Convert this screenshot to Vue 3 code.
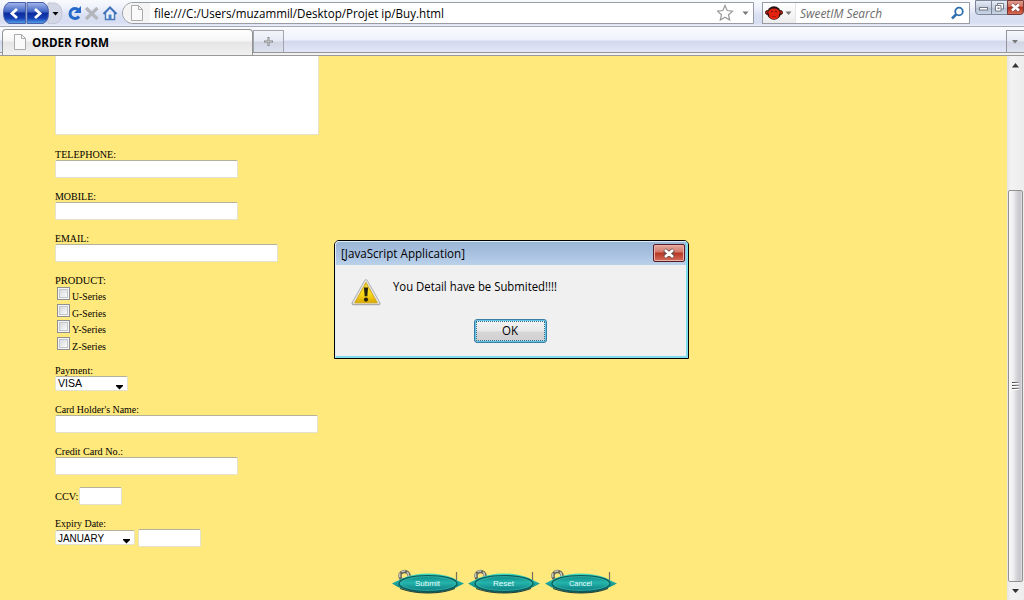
<script setup>
import { h } from 'vue'

// Text run drawn at a fixed measured width
const Fit = (p) =>
  h('svg', { width: p.w + 2, height: p.h, class: 'fit' }, [
    h('text', { x: 0, y: p.y, textLength: p.w, lengthAdjust: 'spacingAndGlyphs' }, p.t),
  ])
Fit.props = ['w', 'h', 'y', 't']

const contacts = [
  { label: 'TELEPHONE:', lw: 61, size: 'mid' },
  { label: 'MOBILE:', lw: 41, size: 'mid' },
  { label: 'EMAIL:', lw: 34, size: 'long' },
]
const cards = [
  { label: "Card Holder's Name:", lw: 84, size: 'wide' },
  { label: 'Credit Card No.:', lw: 68, size: 'mid' },
]
const products = ['U-Series', 'G-Series', 'Y-Series', 'Z-Series']
const buttons = [
  { t: 'Submit', w: 25 },
  { t: 'Reset', w: 21 },
  { t: 'Cancel', w: 23 },
]
</script>

<template>
  <div class="window">
    <header class="toolbar">
      <svg class="nav" width="122" height="27" viewBox="0 0 122 27">
        <defs>
          <linearGradient id="blue" x1="0" y1="0" x2="0" y2="1">
            <stop offset="0" stop-color="#a5b8eb" />
            <stop offset=".45" stop-color="#3d62c3" />
            <stop offset=".5" stop-color="#0c2b9c" />
            <stop offset=".75" stop-color="#1540b5" />
            <stop offset="1" stop-color="#58a5ee" />
          </linearGradient>
        </defs>
        <path d="M48 3h7q7 2 7 10.500t-7 10h-7z" fill="#d3d6e5" stroke="#c3c7d8" />
        <path d="M9 2.500h16.500v21H9q-5.500-2-5.500-10.500T9 2.500z" fill="url(#blue)" stroke="#4a60a8" />
        <path d="M27 2.500h16q5.500 2 5.500 10.500T43 23.500H27z" fill="url(#blue)" stroke="#4a60a8" />
        <path d="M17 9l-5 4.500 5 4.500M35 9l5 4.500-5 4.500" fill="none" stroke="#fff" stroke-width="2.800" />
        <path d="M52.500 12h6l-3 3.500z" fill="#000" />
        <path d="M78.500 10a5 5 0 1 0 .5 6.500" fill="none" stroke="#2669c9" stroke-width="3" />
        <path d="M81 6v7h-7z" fill="#2669c9" />
        <path d="M86 8l11.500 11M97.500 8l-11.500 11" stroke="#b5b6bb" stroke-width="3.200" />
        <path d="M105.500 13v6.500h9V13" fill="#edf3ff" stroke="#4a78b8" stroke-width="1.500" />
        <path d="M103.500 14l6.500-6.500 6.500 6.500" fill="none" stroke="#3d70b7" stroke-width="2" />
        <path d="M108.500 19.500v-5h3v5" fill="#4b80c2" />
      </svg>
      <div class="address">
        <span class="site">
          <svg width="14" height="17"><path d="M1.500.5h7l4 4v11h-11zM8.500.5v4h4" fill="#fafafa" stroke="#aaa" /></svg>
        </span>
        <Fit class="ui" :w="290" :h="20" :y="15" t="file:///C:/Users/muzammil/Desktop/Projet ip/Buy.html" />
        <svg class="star" width="36" height="20">
          <path d="M8 2.500l2.200 5 5.300.6-4 3.600 1.200 5.300L8 14.300 3.300 17l1.200-5.300-4-3.600 5.300-.6z" fill="#fff" stroke="#999" stroke-width="1.200" />
          <path d="M25.500 8.500h6l-3 3.500z" fill="#777" />
        </svg>
      </div>
      <div class="search">
        <span class="engine">
          <svg width="32" height="20">
            <circle cx="4.500" cy="9.500" r="2" fill="#d3200f" stroke="#3b0b0b" />
            <circle cx="17.500" cy="9.500" r="2" fill="#d3200f" stroke="#3b0b0b" />
            <ellipse cx="11" cy="10" rx="6.800" ry="6.800" fill="#291010" />
            <ellipse cx="11" cy="9.500" rx="5.800" ry="4" fill="#e3230f" />
            <ellipse cx="11" cy="12.800" rx="5" ry="3.500" fill="#e3230f" />
            <circle cx="9" cy="8.500" r=".8" fill="#52100b" /><circle cx="13" cy="8.500" r=".8" fill="#52100b" />
            <path d="M9 13.500h4" stroke="#a51c0d" />
            <path d="M22.500 8.500h6l-3 3.500z" fill="#777" />
          </svg>
        </span>
        <Fit class="ui hint" :w="82" :h="20" :y="15" t="SweetIM Search" />
        <svg class="lens" width="15" height="15">
          <circle cx="9" cy="5.500" r="3.800" fill="#fff" stroke="#2e6fae" stroke-width="1.800" />
          <path d="M6.300 8.300L2 12.500" stroke="#2e6fae" stroke-width="2.600" />
        </svg>
      </div>
      <svg class="controls" width="49" height="15" viewBox="0 0 49 15">
        <defs>
          <linearGradient id="grey" x1="0" y1="0" x2="0" y2="1">
            <stop offset="0" stop-color="#e8edf7" /><stop offset=".5" stop-color="#c6cfdf" /><stop offset=".55" stop-color="#b4bfd2" /><stop offset="1" stop-color="#ccd7e8" />
          </linearGradient>
          <linearGradient id="red" x1="0" y1="0" x2="0" y2="1">
            <stop offset="0" stop-color="#e4a395" /><stop offset=".45" stop-color="#cc6a58" /><stop offset=".5" stop-color="#b5301b" /><stop offset="1" stop-color="#d6705a" />
          </linearGradient>
        </defs>
        <path d="M.5 .5v10.500q0 3.500 3 3.500h13V.5z" fill="url(#grey)" stroke="#7b8596" />
        <path d="M16.500 .5h16v14h-16z" fill="url(#grey)" stroke="#7b8596" />
        <path d="M32.500 .5h16v10.500q0 3.500-3 3.500h-13z" fill="url(#red)" stroke="#753a38" />
        <rect x="4.500" y="7.500" width="8" height="2.500" fill="#fff" stroke="#737b88" />
        <path d="M22.500 3.500h6v5.500h-6z" fill="#fff" stroke="#737b88" />
        <path d="M20.500 5.500h5.500v5.500h-5.500z" fill="#fff" stroke="#737b88" />
        <path d="M22.500 7.500h2v1.500h-2z" fill="#737b88" />
        <path d="M37 4.500l7 6M44 4.500l-7 6" stroke="#8a4f48" stroke-width="4" />
        <path d="M37 4.500l7 6M44 4.500l-7 6" stroke="#fff" stroke-width="2.600" />
      </svg>
    </header>

    <nav class="tabs">
      <div class="tab">
        <svg width="14" height="17"><path d="M1.500.5h7l4 4v11h-11zM8.500.5v4h4" fill="#fafafa" stroke="#aaa" /></svg>
        <Fit class="ui title" :w="77" :h="20" :y="13.500" t="ORDER FORM" />
      </div>
      <div class="plus">
        <svg width="9" height="9"><path d="M4.500 0v9M0 4.500h9" stroke="#858585" stroke-width="2" /><path d="M4.500 1v7M1 4.500h7" stroke="#ccc" stroke-width=".7" /></svg>
      </div>
      <div class="all"><svg width="7" height="4"><path d="M0 0h6L3 3.500z" fill="#777" /></svg></div>
    </nav>

    <div class="view">
      <main class="page">
        <form class="form">
          <div class="memo"></div>
          <div v-for="f in contacts" :key="f.label" class="group">
            <Fit :w="f.lw" :h="12" :y="10" :t="f.label" />
            <div class="input" :class="f.size"></div>
          </div>
          <div class="group">
            <Fit :w="51" :h="12" :y="10" t="PRODUCT:" />
            <div v-for="p in products" :key="p" class="check">
              <i class="box"></i>
              <Fit :w="34" :h="15" :y="12" :t="p" />
            </div>
          </div>
          <div class="group">
            <Fit :w="38" :h="12" :y="10" t="Payment:" />
            <div class="select visa">
              <Fit :w="24" :h="15" :y="11" t="VISA" />
              <svg width="7" height="5"><path d="M0 0h7v1L3.500 4.500 0 1z" /></svg>
            </div>
          </div>
          <div v-for="f in cards" :key="f.label" class="group">
            <Fit :w="f.lw" :h="12" :y="10" :t="f.label" />
            <div class="input" :class="f.size"></div>
          </div>
          <div class="group line">
            <Fit class="ccv" :w="23.500" :h="18" :y="13" t="CCV:" />
            <div class="input tiny"></div>
          </div>
          <div class="group">
            <Fit :w="51" :h="12" :y="10" t="Expiry Date:" />
            <div class="line">
              <div class="select month">
                <Fit :w="46" :h="15" :y="11.500" t="JANUARY" />
                <svg width="7" height="5"><path d="M0 0h7v1L3.500 4.500 0 1z" /></svg>
              </div>
              <div class="input year"></div>
            </div>
          </div>
        </form>
        <div class="actions">
          <svg v-for="b in buttons" :key="b.t" width="72" height="26" viewBox="0 0 72 26">
            <defs>
              <linearGradient id="teal" x1="0" y1="0" x2="0" y2="1">
                <stop offset="0" stop-color="#3ddcbd" /><stop offset=".5" stop-color="#1aa59e" /><stop offset="1" stop-color="#056468" />
              </linearGradient>
              <linearGradient id="gem" x1="0" y1="0" x2="0" y2="1">
                <stop offset="0" stop-color="#0a8582" /><stop offset=".45" stop-color="#25b5ac" /><stop offset="1" stop-color="#08777c" />
              </linearGradient>
            </defs>
            <circle cx="12.500" cy="7" r="4.500" fill="none" stroke="#666557" stroke-width="3.400" />
            <circle cx="12" cy="6.500" r="4.500" fill="none" stroke="#c4c3b8" stroke-width="1.700" stroke-dasharray="4 2" />
            <path d="M64.500 3v12" stroke="#77705a" stroke-width="1.200" />
            <path d="M0 14.500Q5 12 11 9 22 4.500 36 4.500t25 4.500q5 3 11 5.500-6 3-11 5.500-11 4-25 4t-25-4Q5 18 0 14.500z" fill="url(#teal)" />
            <path d="M8 19.500Q20 24 36 24t27-4.500" fill="none" stroke="#213d35" />
            <ellipse cx="36" cy="14.500" rx="29" ry="8" fill="url(#gem)" stroke="#0b5a59" stroke-width="1.200" />
            <ellipse cx="36" cy="14.500" rx="27.200" ry="6.800" fill="none" stroke="#46bdb2" stroke-width=".6" />
            <text x="35.500" y="17" text-anchor="middle" :textLength="b.w" lengthAdjust="spacingAndGlyphs">{{ b.t }}</text>
          </svg>
        </div>
      </main>
      <aside class="scroll">
        <svg class="arrow" width="8" height="5"><path d="M0 4.500h7L3.500 0z" fill="#333" /></svg>
        <div class="thumb"><i></i><i></i><i></i></div>
        <svg class="arrow" width="8" height="5"><path d="M0 0h7L3.500 4z" fill="#333" /></svg>
      </aside>
    </div>

    <section class="dialog">
      <div class="caption">
        <Fit class="ui" :w="124" :h="20" :y="15" t="[JavaScript Application]" />
        <div class="close">
          <svg width="14" height="11"><path d="M2.500 2l9 7M11.500 2l-9 7" stroke="#66504f" stroke-width="4.600" /><path d="M3 2l8 7M11 2l-8 7" stroke="#fff" stroke-width="2.600" /></svg>
        </div>
      </div>
      <div class="message">
        <svg class="alert" width="32" height="30" viewBox="-1 -1 34 32">
          <defs>
            <linearGradient id="warn" x1="0" y1="0" x2="0" y2="1">
              <stop offset="0" stop-color="#eed03a" /><stop offset=".55" stop-color="#fbdc1c" /><stop offset="1" stop-color="#d9a800" />
            </linearGradient>
          </defs>
          <path d="M16 2.500L29.500 26h-27z" fill="#aaa" stroke="#aaa" stroke-width="4" stroke-linejoin="round" />
          <path d="M16 2.500L29 25.500H3z" fill="#e2e2df" stroke="#e2e2df" stroke-width="2.600" stroke-linejoin="round" />
          <path d="M16 3.800L28 25.500H4z" fill="url(#warn)" stroke="#d3a413" stroke-linejoin="round" />
          <path d="M13.800 9h4.400l-.8 9.500h-2.800z" fill="#26230f" /><circle cx="16" cy="22" r="2.200" fill="#26230f" />
        </svg>
        <Fit class="ui msg" :w="164" :h="20" :y="14" t="You Detail have be Submited!!!!" />
      </div>
      <div class="ok"><div class="focus"><Fit class="ui" :w="16" :h="18" :y="13" t="OK" /></div></div>
    </section>
  </div>
</template>

<style>
body { overflow: hidden; }
.fit { display: block; flex: none; overflow: visible; }
</style>

<style scoped>
* { box-sizing: border-box; }
svg { display: block; flex: none; }
.window { position: relative; width: 1024px; height: 600px; overflow: hidden; display: flex; flex-direction: column; font: 10px "Liberation Serif", serif; }
.ui { font: 12px "Open Sans", "Noto Sans", sans-serif; }
.toolbar { height: 27px; flex: none; display: flex; background: linear-gradient(#f8f9fd 0 1px, #eef1fb 8px, #dae0f3 15px, #d8def2 23px, #eceffa); border-bottom: 1px solid #a6aab6; }
.address { display: flex; align-items: center; width: 632px; height: 22px; margin: 2px 8px 0 0; background: #fff; border: 1px solid #999ca5; border-radius: 11px 0 0 11px; }
.site { width: 27px; height: 20px; padding: 2px 0 0 7px; margin-right: 4px; background: #f4f4f4; border-radius: 10px 0 0 10px; }
.star { margin-left: auto; }
.search { display: flex; align-items: center; width: 208px; height: 22px; margin: 2px 5px 0 0; background: #fff; border: 1px solid #999ca5; }
.engine { width: 33px; background: linear-gradient(#fff, #ececec); border-right: 1px solid #e4e4e4; margin-right: 4px; }
.hint { font-style: italic; fill: #6b6b6b; }
.lens { margin: 0 4px 0 auto; }
.tabs { height: 29px; flex: none; display: flex; align-items: flex-start; background: linear-gradient(#fafbff 0, #eff2fb 13px, #d3d9ec 14px, #e1e7f8 25px, #979797 25px 26px, #f1f1f1 26px 28px, #999 28px); }
.tab { display: flex; align-items: center; width: 251px; height: 26px; margin: 2px 0 0 2px; padding-left: 10px; border: 1px solid #929292; border-bottom: 0; border-radius: 4px 4px 0 0; background: linear-gradient(#fff, #f6f6f6 11px, #e5e5e5 12px, #f1f1f1); }
.title { font-weight: 700; margin-left: 5px; }
.plus { display: grid; place-items: center; width: 31px; height: 22px; margin-top: 3px; border: 1px solid #a2a5ae; border-bottom: 0; background: linear-gradient(#f4f5fa, #e6eaf5 10px, #d0d5e4 11px, #dde2ef); }
.all { display: grid; place-items: center; width: 18px; height: 22px; margin: 3px 0 0 auto; border-left: 1px solid #92959e; border-top: 1px solid #92959e; background: linear-gradient(#f7f8fc, #e5e9f4 10px, #d0d5e4 11px, #e0e4f0); }
.view { flex: 1; display: flex; min-height: 0; }
.page { width: 1007px; background: #ffe87c; display: flex; flex-direction: column; }
.form { padding-left: 55px; height: 513px; }
.memo { width: 264px; height: 79px; background: #fff; border: 1px solid #e3e2cf; border-top: 0; border-radius: 0 0 2px 2px; margin-bottom: 13px; }
.group { margin-bottom: 12px; }
.input { height: 18px; background: #fff; border: 1px solid #e3e2cf; border-top-color: #b3b09b; border-radius: 2px; }
.mid { width: 183px; }
.long { width: 223px; }
.wide { width: 263px; }
.tiny { width: 43px; }
.year { width: 63px; margin-left: 3px; }
.line { display: flex; }
.ccv { width: 24px; }
.check { display: flex; height: 16.5px; padding-left: 2px; align-items: flex-start; }
.check .fit { margin-left: 2px; margin-top: 2px; }
.box { width: 13px; height: 13px; margin-top: 1px; border: 1px solid #8e8f8f; background: linear-gradient(135deg, #cdd0d6, #f6f6f6 75%); box-shadow: inset 0 0 0 1px #f4f4f4, inset 0 0 0 2px #c3c7cd; }
.select { display: flex; justify-content: space-between; height: 15px; background: #fff; border: 1px solid #e3e2cf; border-top-color: #b3b09b; border-radius: 2px; padding: 0 4px 0 2px; font: 10px "Liberation Sans", sans-serif; }
.select > svg:last-child { margin-top: 8px; }
.select .fit { margin-top: -1px; }
.visa { width: 73px; }
.month { width: 80px; margin-top: 1px; }
.actions { display: flex; gap: 4.5px; margin-left: 391.5px; }
.actions text { font: 7.5px "Liberation Sans", sans-serif; fill: #e8ffff; }
.scroll { width: 17px; background: linear-gradient(90deg, #e5e5e5, #f2f2f2 4px, #ededed); display: flex; flex-direction: column; align-items: center; }
.arrow { margin-top: 7px; }
.thumb { width: 15px; height: 392px; margin-top: 122px; border: 1px solid #929292; border-radius: 2px; background: linear-gradient(90deg, #fafafa, #ebebed 5px, #d8d8dd 7px, #c6c6cd 11px, #dedee2); display: flex; flex-direction: column; align-items: center; justify-content: center; gap: 1px; }
.thumb i { width: 7px; height: 2px; background: linear-gradient(90deg, #444, #999); border-bottom: 1px solid #fff; }
.dialog { position: absolute; left: 334px; top: 240px; width: 355px; height: 119px; border: 1px solid #000; border-radius: 5px 5px 0 0; background: #f0f0f0; overflow: hidden; }
.dialog::after { content: ""; position: absolute; inset: 0; border: 1px solid #dfeefa; border-right: 2px solid #7fdcee; border-bottom: 2px solid #7fdcee; border-radius: 4px 4px 0 0; }
.caption { display: flex; justify-content: space-between; height: 24px; padding: 3px 3px 0 6px; background: linear-gradient(#9bb5d5 1px, #a7c0df 12px, #bad1ea); }
.caption .fit { margin-top: -1px; }
.close { width: 32px; height: 18px; display: grid; place-items: center; border: 1px solid #581c24; border-radius: 2px; background: linear-gradient(#e5aaa0, #d3786a 7px, #b93523 8px, #d36e5e); box-shadow: inset 0 0 0 1px #eab1a8; }
.message { display: flex; padding: 12px 0 0 15px; height: 53px; }
.alert { margin-top: 1px; }
.msg { margin-left: 11px; }
.ok { width: 73px; height: 24px; margin: 1px 0 0 139px; padding: 1px; border: 1px solid #3b7da3; border-radius: 3px; background: linear-gradient(#f3f3f3, #e9e9e9 11px, #d7d7d7 12px, #d0d0d0); box-shadow: inset 0 0 0 1px #62c6ea; }
.focus { height: 100%; border: 1px dotted #376e86; display: grid; place-items: center; }
</style>
